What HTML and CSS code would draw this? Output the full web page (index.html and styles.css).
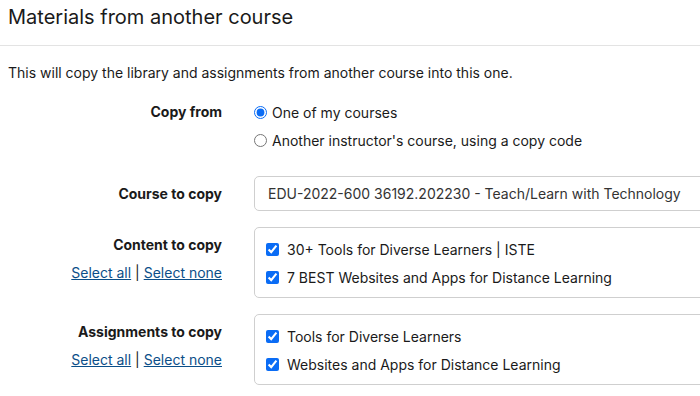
FILE: index.html
```html
<!DOCTYPE html>
<html lang="en">
<head>
    <meta charset="UTF-8">
    <title>Materials from another course</title>
    <link rel="stylesheet" href="styles.css">
</head>
<body>
    <div class="page-header">
        <h1>Materials from another course</h1>
    </div>
    <p class="intro">This will copy the library and assignments from another course into this one.</p>

    <form class="copy-form">
        <div class="field field-first">
            <div class="field-label"><strong>Copy from</strong></div>
            <div class="field-control">
                <label class="option"><input type="radio" name="source" checked> One of my courses</label>
                <label class="option"><input type="radio" name="source"> Another instructor's course, using a copy code</label>
            </div>
        </div>

        <div class="field">
            <div class="field-label label-center"><strong>Course to copy</strong></div>
            <div class="field-control">
                <div class="select-box">EDU-2022-600 36192.202230 - Teach/Learn with Technology</div>
            </div>
        </div>

        <div class="field">
            <div class="field-label label-list">
                <strong>Content to copy</strong>
                <div><a href="#">Select all</a> | <a href="#">Select none</a></div>
            </div>
            <div class="field-control">
                <div class="check-box">
                    <label class="option"><input type="checkbox" checked> 30+ Tools for Diverse Learners | ISTE</label>
                    <label class="option"><input type="checkbox" checked> 7 BEST Websites and Apps for Distance Learning</label>
                </div>
            </div>
        </div>

        <div class="field">
            <div class="field-label label-list">
                <strong>Assignments to copy</strong>
                <div><a href="#">Select all</a> | <a href="#">Select none</a></div>
            </div>
            <div class="field-control">
                <div class="check-box">
                    <label class="option"><input type="checkbox" checked> Tools for Diverse Learners</label>
                    <label class="option"><input type="checkbox" checked> Websites and Apps for Distance Learning</label>
                </div>
            </div>
        </div>
    </form>
</body>
</html>
```

FILE: styles.css
```css
body {
    font-family: Inter, "Liberation Sans", Arial, sans-serif;
    font-size: 14px;
    color: #1a1a1a;
    background: #fff;
    margin: 0;
    overflow: hidden;
}

.page-header {
    padding: 0 8px 11px;
    border-bottom: 1px solid #e3e3e3;
}
.page-header h1 {
    margin: 0;
    font-size: 20px;
    font-weight: normal;
    line-height: 34px;
}

.intro {
    margin: 15px 0 0;
    padding: 0 8px;
    line-height: 24px;
}

.copy-form {
    margin-top: 13px;
}
.field {
    display: grid;
    grid-template-columns: 222px 480px;
    column-gap: 32px;
    margin-bottom: 16px;
}
.field-first {
    margin-bottom: 22px;
}
.field-label {
    text-align: right;
    line-height: 28px;
}
.label-center {
    line-height: 35px;
}
.label-list {
    padding-top: 4px;
}
.field-label strong {
    font-weight: 700;
}
.field-label a {
    color: #0b4e88;
}

.option {
    display: flex;
    align-items: center;
    height: 28px;
}
.option input {
    margin: 0 5px 0 0;
    width: 13px;
    height: 13px;
    accent-color: #0a6cf5;
}

.select-box {
    box-sizing: border-box;
    height: 35px;
    line-height: 33px;
    padding: 0 13px;
    border: 1px solid #cfcfcf;
    border-radius: 5px;
    color: #333;
}

.check-box {
    padding: 7px 11px 6px;
    border: 1px solid #cfcfcf;
    border-radius: 5px;
}
.check-box .option input {
    margin-right: 8px;
}
```
